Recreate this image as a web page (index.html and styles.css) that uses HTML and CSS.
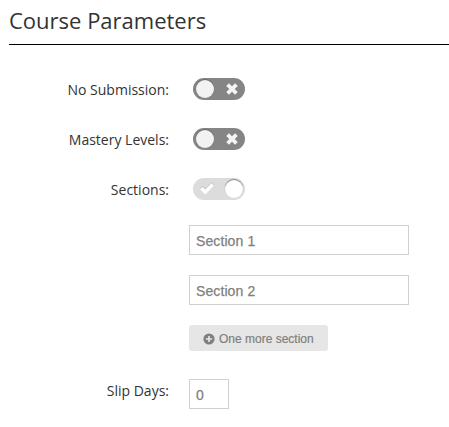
FILE: index.html
```html
<!DOCTYPE html>
<html lang="en">
<head>
<meta charset="utf-8">
<title>Course Parameters</title>
<link rel="stylesheet" href="styles.css">
</head>
<body>
<h1 class="title">Course Parameters</h1>
<form class="params">
  <div class="row">
    <span class="label">No Submission:</span>
    <span class="toggle"><span class="knob"></span><svg class="cross" viewBox="0 0 14 14"><path d="M2.6 2.6 11.4 11.4M11.4 2.6 2.6 11.4"/></svg></span>
  </div>
  <div class="row">
    <span class="label">Mastery Levels:</span>
    <span class="toggle"><span class="knob"></span><svg class="cross" viewBox="0 0 14 14"><path d="M2.6 2.6 11.4 11.4M11.4 2.6 2.6 11.4"/></svg></span>
  </div>
  <div class="row">
    <span class="label">Sections:</span>
    <span class="toggle on"><svg class="check" viewBox="0 0 16 14"><path class="shade" d="M2.2 6.3 6.3 10.3 13.6 2.6"/><path d="M2.2 7 6.3 11 13.6 3.3"/></svg><span class="knob"></span></span>
  </div>
  <div class="row field"><input class="input" type="text" placeholder="Section 1"></div>
  <div class="row field"><input class="input" type="text" placeholder="Section 2"></div>
  <div class="row field">
    <button class="add" type="button"><svg class="plus" viewBox="0 0 12 12"><circle cx="6" cy="6" r="5.6"/><path d="M6 2.9V9.1M2.9 6H9.1"/></svg>One more section</button>
  </div>
  <div class="row slip">
    <span class="label">Slip Days:</span>
    <input class="input small" type="text" placeholder="0">
  </div>
</form>
</body>
</html>
```
FILE: styles.css
```css
* { box-sizing: border-box; }
body {
  margin: 0;
  padding-left: 9px;
  background: #fff;
  color: #333;
  font-family: "Open Sans", "Noto Sans", sans-serif;
  font-size: 14px;
  overflow: hidden;
}
.title {
  margin: 0;
  height: 45px;
  padding-top: 4px;
  border-bottom: 1px solid #000;
  font-size: 22px;
  font-weight: 400;
  line-height: 32px;
}
.params { padding-top: 30px; }
.row { display: flex; height: 50px; }
.label {
  width: 161px;
  padding-right: 1px;
  line-height: 30px;
  text-align: right;
  white-space: nowrap;
}
.slip .label { line-height: 32px; }
.toggle {
  display: flex;
  align-items: center;
  justify-content: space-between;
  width: 52px;
  height: 22px;
  margin: 3px 0 0 23px;
  padding: 0 2px 0 3px;
  border-radius: 11px;
  background: #858585;
}
.knob {
  width: 18px;
  height: 18px;
  border-radius: 50%;
  background: #f2f2f2;
  box-shadow: 0 -1px 1px rgba(0, 0, 0, .2);
}
.cross { width: 14px; height: 14px; margin: 0 4px 1px 0; }
.cross path { stroke: #f4f4f4; stroke-width: 3.8; fill: none; }
.toggle.on { padding: 0 2px 0 6px; background: #dcdcdc; }
.on .knob { background: #fff; box-shadow: 0 -1px 1px rgba(0, 0, 0, .4); }
.check { width: 16px; height: 14px; margin-bottom: 3px; }
.check path { stroke: #fff; stroke-width: 3.4; fill: none; }
.check .shade { stroke: #b5b5b5; }
.field { padding-left: 180px; }
.input {
  width: 220px;
  height: 30px;
  padding: 2px 6px 0;
  border: 1px solid #d0d0d0;
  border-radius: 0;
  background: #fff;
  color: #777;
  font: 14px "Liberation Sans", Arial, sans-serif;
  letter-spacing: .1px;
}
.input::placeholder { color: #808080; opacity: 1; -webkit-text-stroke: .25px #808080; }
.small { width: 40px; margin: 4px 0 0 19px; }
.add {
  display: flex;
  align-items: center;
  width: 139px;
  height: 26px;
  padding: 1px 0 0 14px;
  border: 0;
  border-radius: 3px;
  background: #e6e6e6;
  color: #808080;
  font: 12px "Liberation Sans", Arial, sans-serif;
  white-space: nowrap;
  -webkit-text-stroke: .2px #808080;
}
.plus { width: 12px; height: 12px; margin-right: 4px; }
.plus circle { fill: #808080; stroke: none; }
.plus path { stroke: #e6e6e6; stroke-width: 1.7; }
```
